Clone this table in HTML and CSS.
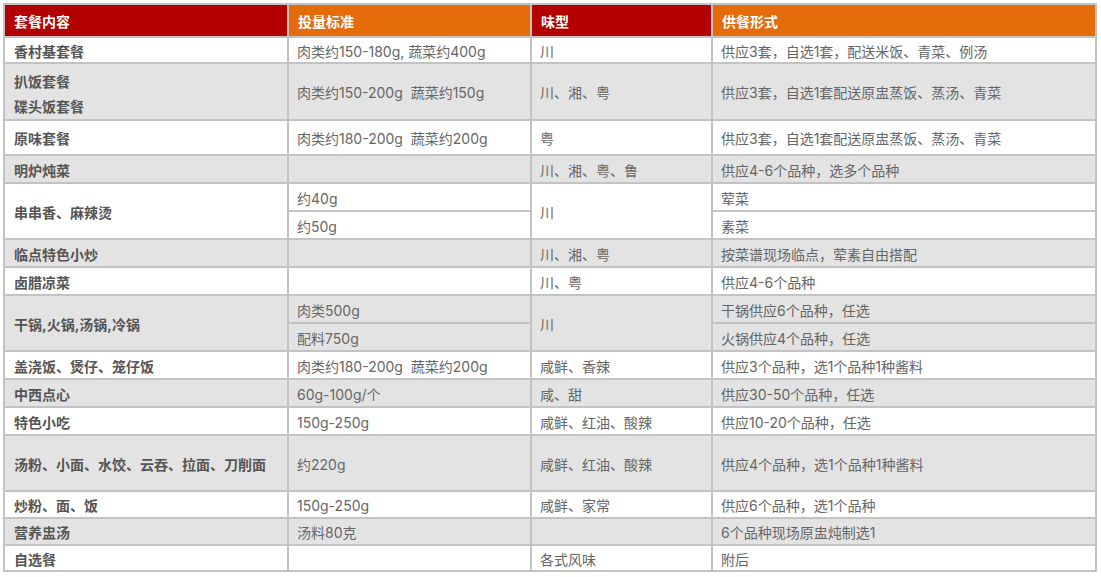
FILE: index.html
```html
<!DOCTYPE html>
<html lang="zh-CN">
<head>
<meta charset="utf-8">
<title>套餐标准</title>
<link rel="stylesheet" href="styles.css">
</head>
<body>
<table class="menu">
  <colgroup>
    <col class="c1"><col class="c2"><col class="c3"><col class="c4">
  </colgroup>
  <thead>
    <tr class="head">
      <th class="red">套餐内容</th>
      <th class="orange">投量标准</th>
      <th class="red">味型</th>
      <th class="orange">供餐形式</th>
    </tr>
  </thead>
  <tbody>
    <tr class="w h26">
      <td class="name">香村基套餐</td>
      <td>肉类约150-180g, 蔬菜约400g</td>
      <td>川</td>
      <td>供应3套，自选1套，配送米饭、青菜、例汤</td>
    </tr>
    <tr class="g h57">
      <td class="name two">扒饭套餐<br>碟头饭套餐</td>
      <td>肉类约150-200g&nbsp; 蔬菜约150g</td>
      <td>川、湘、粤</td>
      <td>供应3套，自选1套配送原盅蒸饭、蒸汤、青菜</td>
    </tr>
    <tr class="w h35">
      <td class="name">原味套餐</td>
      <td>肉类约180-200g&nbsp; 蔬菜约200g</td>
      <td>粤</td>
      <td>供应3套，自选1套配送原盅蒸饭、蒸汤、青菜</td>
    </tr>
    <tr class="g h28">
      <td class="name">明炉炖菜</td>
      <td></td>
      <td>川、湘、粤、鲁</td>
      <td>供应4-6个品种，选多个品种</td>
    </tr>
    <tr class="w h28">
      <td class="name" rowspan="2">串串香、麻辣烫</td>
      <td>约40g</td>
      <td rowspan="2">川</td>
      <td>荤菜</td>
    </tr>
    <tr class="w h28">
      <td>约50g</td>
      <td>素菜</td>
    </tr>
    <tr class="g h28">
      <td class="name">临点特色小炒</td>
      <td></td>
      <td>川、湘、粤</td>
      <td>按菜谱现场临点，荤素自由搭配</td>
    </tr>
    <tr class="w h28">
      <td class="name">卤腊凉菜</td>
      <td></td>
      <td>川、粤</td>
      <td>供应4-6个品种</td>
    </tr>
    <tr class="g h28">
      <td class="name" rowspan="2">干锅,火锅,汤锅,冷锅</td>
      <td>肉类500g</td>
      <td rowspan="2">川</td>
      <td>干锅供应6个品种，任选</td>
    </tr>
    <tr class="g h28">
      <td>配料750g</td>
      <td>火锅供应4个品种，任选</td>
    </tr>
    <tr class="w h28">
      <td class="name">盖浇饭、煲仔、笼仔饭</td>
      <td>肉类约180-200g&nbsp; 蔬菜约200g</td>
      <td>咸鲜、香辣</td>
      <td>供应3个品种，选1个品种1种酱料</td>
    </tr>
    <tr class="g h28">
      <td class="name">中西点心</td>
      <td>60g-100g/个</td>
      <td>咸、甜</td>
      <td>供应30-50个品种，任选</td>
    </tr>
    <tr class="w h28">
      <td class="name">特色小吃</td>
      <td>150g-250g</td>
      <td>咸鲜、红油、酸辣</td>
      <td>供应10-20个品种，任选</td>
    </tr>
    <tr class="g h56">
      <td class="name">汤粉、小面、水饺、云吞、拉面、刀削面</td>
      <td>约220g</td>
      <td>咸鲜、红油、酸辣</td>
      <td>供应4个品种，选1个品种1种酱料</td>
    </tr>
    <tr class="w h27">
      <td class="name">炒粉、面、饭</td>
      <td>150g-250g</td>
      <td>咸鲜、家常</td>
      <td>供应6个品种，选1个品种</td>
    </tr>
    <tr class="g h27">
      <td class="name">营养盅汤</td>
      <td>汤料80克</td>
      <td></td>
      <td>6个品种现场原盅炖制选1</td>
    </tr>
    <tr class="w h26">
      <td class="name">自选餐</td>
      <td></td>
      <td>各式风味</td>
      <td>附后</td>
    </tr>
  </tbody>
</table>
</body>
</html>
```

FILE: styles.css
```css
html, body {
  margin: 0;
  padding: 0;
  background: #ffffff;
}

body {
  padding: 3px;
  font-family: Inter, "Noto Sans CJK SC", sans-serif;
  font-size: 14px;
  color: #666666;
}

.menu {
  table-layout: fixed;
  width: 1094px;
  border-collapse: separate;
  border-spacing: 0;
  border-top: 2px solid #c3c3c3;
  border-left: 2px solid #c3c3c3;
}

.c1 { width: 284px; }
.c2 { width: 243px; }
.c3 { width: 181px; }
.c4 { width: 384px; }

.menu th,
.menu td {
  box-sizing: border-box;
  border-right: 2px solid #c3c3c3;
  border-bottom: 2px solid #c3c3c3;
  padding: 3px 6px 0 8px;
  line-height: 20px;
  text-align: left;
  vertical-align: middle;
  white-space: nowrap;
  overflow: hidden;
}

.menu th {
  height: 33px;
  color: #ffffff;
  font-weight: bold;
  padding-left: 9px;
}

.red { background: #b30000; }
.orange { background: #e46c0a; }

.w td { background: #ffffff; }
.g td { background: #e3e3e3; }

.menu td.name {
  padding-left: 9px;
  font-weight: bold;
  color: #555555;
}

.menu td.two {
  line-height: 25px;
  padding-top: 4px;
}

.h26 td { height: 26px; }
.h27 td { height: 27px; }
.h28 td { height: 28px; }
.h35 td { height: 35px; }
.h56 td { height: 56px; }
.h57 td { height: 57px; }
```
